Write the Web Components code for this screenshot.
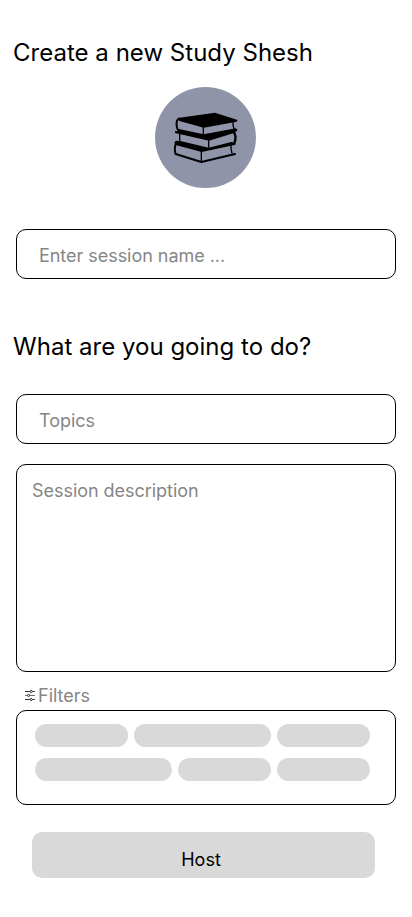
<!DOCTYPE html>
<html lang="en"><head><meta charset="utf-8"><title>Create a new Study Shesh</title>
<style>
html,body{margin:0;background:#fff}
body{font-family:Inter,"Liberation Sans",sans-serif;font-weight:400;color:#000}
</style></head><body>
<study-page></study-page>
<script>
const define = (name, html) => customElements.define(name, class extends HTMLElement {
  constructor() {
    super();
    const t = document.createElement('template');
    t.innerHTML = html;
    this.attachShadow({mode: 'open'}).append(t.content.cloneNode(true));
  }
});

define('page-heading', `<style>
:host{display:block;height:30px}
h1{margin:0;font-size:24px;line-height:30px;font-weight:inherit;white-space:nowrap;letter-spacing:.02px}
</style><h1><slot></slot></h1>`);

define('book-avatar', `<style>
:host{display:block;width:101px;height:101px;border-radius:50%;background:#8f94a9}
svg{display:block;width:101px;height:101px}
</style><svg viewBox="15 21 303 303" fill="none" stroke="#000" stroke-width="4" stroke-linejoin="round" stroke-linecap="round">
<path fill="#000" stroke="none" d="M83 114L195 98L263 120L260 125L161 143L88 123Z"/>
<path stroke-width="6" d="M87 116Q78 121 80 135Q80 146 84 150"/>
<path d="M160 141V167M249 125Q248 138 253 148M89 162V188M176 180V206M154 213V246M243 197Q242 208 246 220"/>
<path fill="#000" stroke="none" d="M83 146L161 163L258 145L263 151L252 159L177 182L75 159L75 154L83 153Z"/>
<path stroke-width="7" d="M252 157Q260 170 254 186"/>
<path fill="#000" stroke="none" d="M77 182L91 183L176 203L244 186L257 188L256 194L243 197L155 216L77 195L73 188Z"/>
<path stroke-width="6" d="M79 189Q72 201 76 220"/>
<path stroke-width="6" d="M77 222L154 246L255 222"/>
</svg>`);

define('outlined-box', `<style>
:host{display:block;box-sizing:border-box;width:380px;border:1px solid #000;border-radius:10px;font-size:18px;line-height:22px;letter-spacing:-.04px;color:#868686}
</style><slot></slot>`);

define('filter-label', `<style>
:host{display:flex;align-items:flex-start;height:22px;font-size:18px;line-height:22px;color:#868686}
svg{width:12px;height:12px;margin:5px 2px 0 0;flex:none}
</style><svg viewBox="0 0 12 12" fill="none" stroke="#222" stroke-width=".9">
<path d="M1 1.5H6M8.4 1.5H11M1 9.5H6M8.4 9.5H11"/><path stroke="#555" d="M1 5.4H3.4M5.8 5.4H11"/><circle cx="7.2" cy="1.5" r="1.1"/><circle cx="4.6" cy="5.4" r="1.1"/><circle cx="7.2" cy="9.5" r="1.1"/></svg><span><slot></slot></span>`);

define('filter-chip', `<style>
:host{display:block;height:23px;width:93px;border-radius:12px;background:#d9d9d9}
:host([wide]){width:137px}
</style>`);

define('chip-grid', `<style>
:host{display:flex;flex-wrap:wrap;gap:11px 6px;width:336px}
</style><slot></slot>`);

define('host-button', `<style>
:host{display:block}
button{display:block;width:343px;height:46px;padding:9px 5px 0 0;border:0;border-radius:10px;background:#d9d9d9;color:#000;font:inherit;font-size:18px;line-height:22px;text-align:center}
</style><button><slot></slot></button>`);

define('study-page', `<style>
:host{display:flex;flex-direction:column;box-sizing:border-box;width:412px;height:917px;padding:38px 16px 0;overflow:hidden}
page-heading{margin-left:-3px}
book-avatar{margin:19px 0 0 139px}
.name{height:50px;margin-top:41px;padding:15px 22px}
.second{margin-top:53px}
.topics{height:50px;margin-top:32px;padding:15px 22px}
.desc{height:208px;margin-top:20px;padding:15px}
filter-label{margin:13px 0 0 8px}
.filters{height:95px;margin-top:3px;padding:13px 18px}
host-button{margin:27px 0 0 16px}
</style>
<page-heading>Create a new Study Shesh</page-heading>
<book-avatar></book-avatar>
<outlined-box class="name">Enter session name ...</outlined-box>
<page-heading class="second">What are you going to do?</page-heading>
<outlined-box class="topics">Topics</outlined-box>
<outlined-box class="desc">Session description</outlined-box>
<filter-label>Filters</filter-label>
<outlined-box class="filters"><chip-grid><filter-chip></filter-chip><filter-chip wide></filter-chip><filter-chip></filter-chip><filter-chip wide></filter-chip><filter-chip></filter-chip><filter-chip></filter-chip></chip-grid></outlined-box>
<host-button>Host</host-button>`);
</script></body></html>
